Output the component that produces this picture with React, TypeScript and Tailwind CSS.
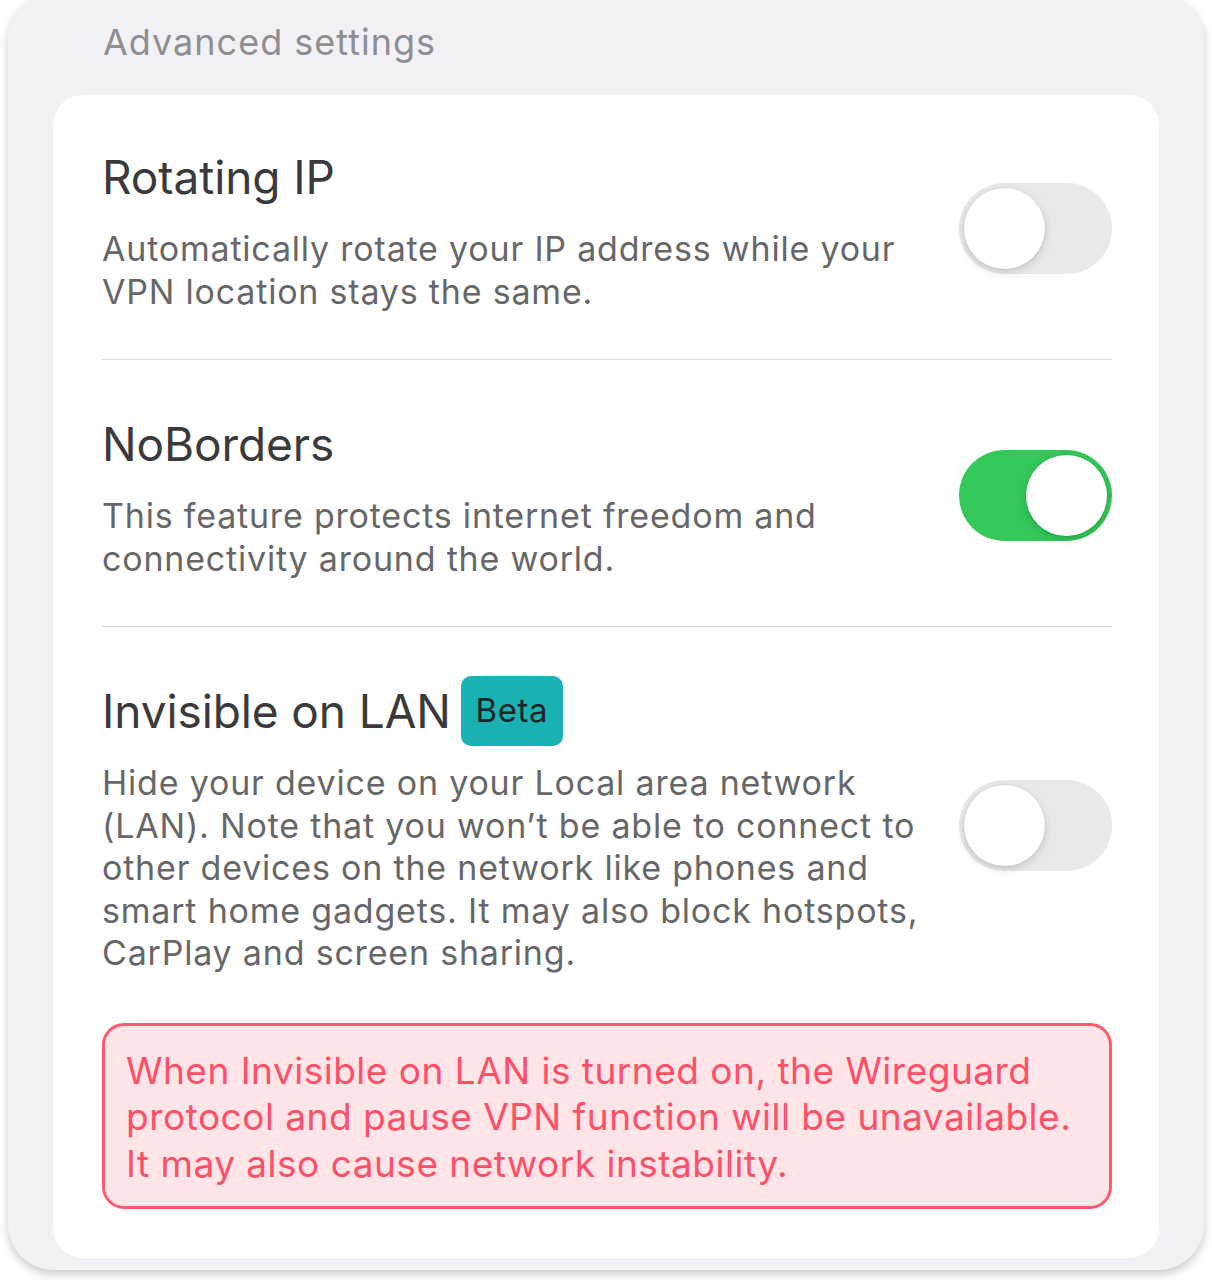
import React from 'react';

type ToggleProps = { on?: boolean };

function Toggle({ on = false }: ToggleProps) {
  return (
    <div
      className={`mb-[8px] flex h-[91px] w-[153px] shrink-0 items-center rounded-full p-[5px] ${
        on ? 'justify-end bg-[#34c759]' : 'justify-start bg-[#e9e9eb]'
      }`}
    >
      <div className="h-[81px] w-[81px] rounded-full bg-white shadow-[0_3px_8px_rgba(0,0,0,0.16),0_0_0_1px_rgba(0,0,0,0.03)]" />
    </div>
  );
}

function Row({
  title,
  lines,
  on,
  badge,
}: {
  title: string;
  lines: string[];
  on?: boolean;
  badge?: string;
}) {
  return (
    <div className="flex items-center gap-[30px]">
      <div className="flex-1">
        <div className="flex h-[52px] items-center gap-[10px]">
          <span className="text-[46px] leading-[52px] tracking-[-0.1px] text-[#3a3a3c]">{title}</span>
          {badge && (
            <span className="flex h-[70px] w-[102px] items-center justify-center rounded-[10px] bg-[#19b1b1] text-[33px] tracking-[0.6px] text-[#1c2526]">
              {badge}
            </span>
          )}
        </div>
        <p className="mt-[25px] text-[34px] leading-[42.5px] tracking-[0.8px] text-[#676769]">
          {lines.map((l, i) => (
            <React.Fragment key={i}>
              {l}
              {i < lines.length - 1 && <br />}
            </React.Fragment>
          ))}
        </p>
      </div>
      <Toggle on={on} />
    </div>
  );
}

export default function App() {
  return (
    <div className="min-h-screen bg-white font-['Inter',sans-serif]">
      <div className="mx-[8px] -mt-[6px] rounded-[46px] bg-[#f2f1f6] px-[45px] pb-[12px] pt-[26px] shadow-[0_4px_10px_rgba(0,0,0,0.22)]">
        <h2 className="pl-[50px] text-[36px] leading-[44px] tracking-[1px] text-[#8e8e93]">Advanced settings</h2>

        <div className="mt-[31px] rounded-[30px] bg-white pb-[49px] pl-[49px] pr-[47px] pt-[56px]">
          <div className="pb-[46px]">
            <Row
              title="Rotating IP"
              lines={['Automatically rotate your IP address while your', 'VPN location stays the same.']}
            />
          </div>
          <div className="h-px bg-[#dadadf]" />
          <div className="pb-[46px] pt-[58px]">
            <Row
              title="NoBorders"
              on
              lines={['This feature protects internet freedom and', 'connectivity around the world.']}
            />
          </div>
          <div className="h-px bg-[#dadadf]" />
          <div className="pt-[58px]">
            <Row
              title="Invisible on LAN"
              badge="Beta"
              lines={[
                'Hide your device on your Local area network',
                '(LAN). Note that you won\u2019t be able to connect to',
                'other devices on the network like phones and',
                'smart home gadgets. It may also block hotspots,',
                'CarPlay and screen sharing.',
              ]}
            />
          </div>

          <div className="mt-[48px] rounded-[22px] border-[3px] border-[#ff5a6e] bg-[#ffe4e8] pb-[19px] pl-[21px] pr-[16px] pt-[22px] text-[37px] leading-[46.5px] tracking-[0.5px] text-[#ff5067]">
            When Invisible on LAN is turned on, the Wireguard
            <br />
            protocol and pause VPN function will be unavailable.
            <br />
            It may also cause network instability.
          </div>
        </div>
      </div>
    </div>
  );
}
